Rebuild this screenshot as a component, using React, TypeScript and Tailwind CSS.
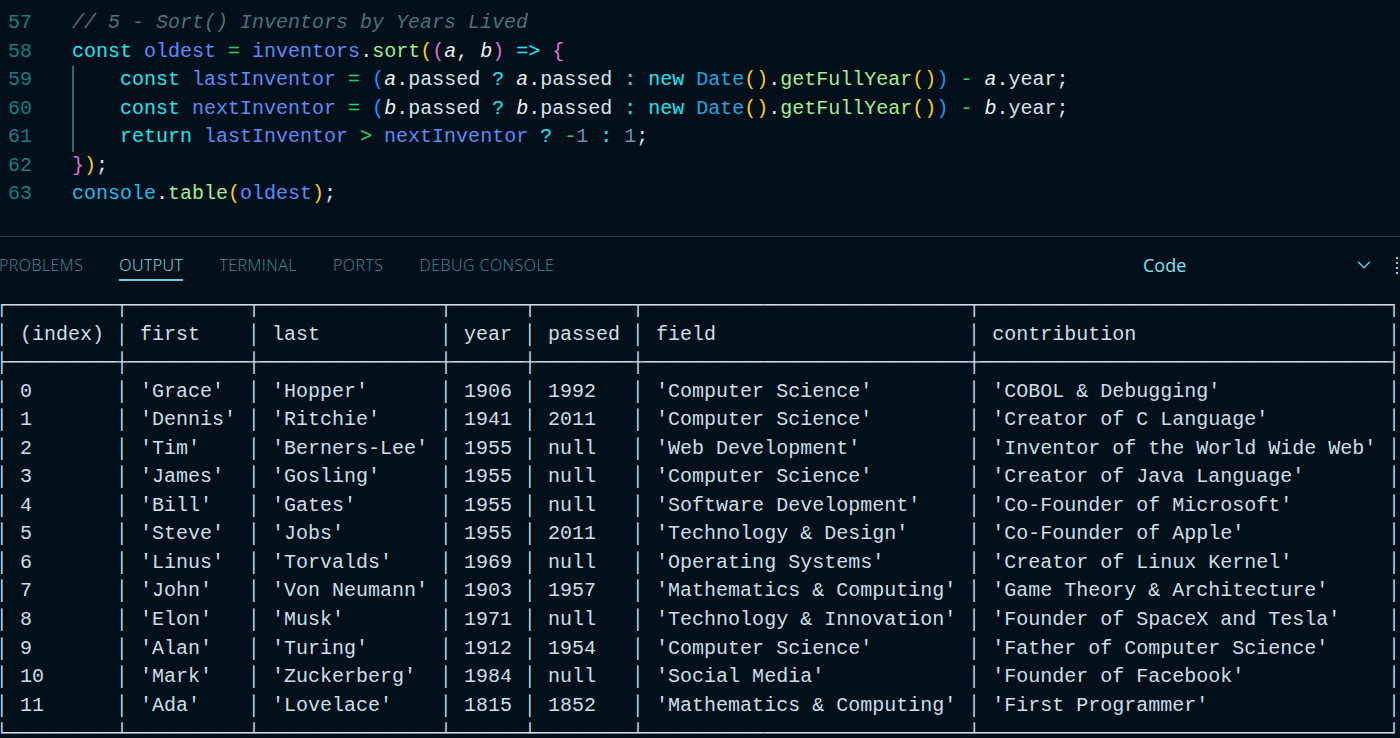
import { ChevronDown } from 'lucide-react';

type Token = [string, string];

const c = {
    kw: 'text-[#19e6f2]',
    id: 'text-[#5b8bf7]',
    op: 'text-[#1fd56d]',
    fn: 'text-[#a3ee8e]',
    txt: 'text-[#d5e4ea]',
    par: 'italic text-[#e9f1f4]',
    y: 'text-[#ffcf0f]',
    pk: 'text-[#e26fd3]',
    bl: 'text-[#1e93ff]',
    cls: 'text-[#19a7e2]',
    num: 'text-[#6a91b6]',
    con: 'text-[#20bce6]',
    cm: 'italic text-[#45747b]',
};

const codeLines: { n: number; indent?: boolean; tokens: Token[] }[] = [
    { n: 57, tokens: [['// 5 - Sort() Inventors by Years Lived', c.cm]] },
    {
        n: 58,
        tokens: [
            ['const', c.kw], [' ', c.txt], ['oldest', c.id], [' ', c.txt], ['=', c.op], [' ', c.txt],
            ['inventors', c.id], ['.', c.txt], ['sort', c.fn], ['(', c.y], ['(', c.pk], ['a', c.par],
            [', ', c.txt], ['b', c.par], [')', c.pk], [' ', c.txt], ['=>', c.kw], [' ', c.txt], ['{', c.pk],
        ],
    },
    {
        n: 59,
        indent: true,
        tokens: [
            ['const', c.kw], [' ', c.txt], ['lastInventor', c.id], [' ', c.txt], ['=', c.op], [' ', c.txt],
            ['(', c.bl], ['a', c.par], ['.passed ', c.txt], ['?', c.kw], [' ', c.txt], ['a', c.par],
            ['.passed ', c.txt], [':', c.kw], [' ', c.txt], ['new', c.kw], [' ', c.txt], ['Date', c.cls],
            ['()', c.y], ['.', c.txt], ['getFullYear', c.fn], ['()', c.y], [')', c.bl], [' ', c.txt],
            ['-', c.op], [' ', c.txt], ['a', c.par], ['.year;', c.txt],
        ],
    },
    {
        n: 60,
        indent: true,
        tokens: [
            ['const', c.kw], [' ', c.txt], ['nextInventor', c.id], [' ', c.txt], ['=', c.op], [' ', c.txt],
            ['(', c.bl], ['b', c.par], ['.passed ', c.txt], ['?', c.kw], [' ', c.txt], ['b', c.par],
            ['.passed ', c.txt], [':', c.kw], [' ', c.txt], ['new', c.kw], [' ', c.txt], ['Date', c.cls],
            ['()', c.y], ['.', c.txt], ['getFullYear', c.fn], ['()', c.y], [')', c.bl], [' ', c.txt],
            ['-', c.op], [' ', c.txt], ['b', c.par], ['.year;', c.txt],
        ],
    },
    {
        n: 61,
        indent: true,
        tokens: [
            ['return', c.kw], [' ', c.txt], ['lastInventor', c.id], [' ', c.txt], ['>', c.op], [' ', c.txt],
            ['nextInventor', c.id], [' ', c.txt], ['?', c.kw], [' ', c.txt], ['-', c.op], ['1', c.num],
            [' ', c.txt], [':', c.kw], [' ', c.txt], ['1', c.num], [';', c.txt],
        ],
    },
    { n: 62, tokens: [['}', c.pk], [')', c.y], [';', c.txt]] },
    {
        n: 63,
        tokens: [
            ['console', c.con], ['.', c.txt], ['table', c.fn], ['(', c.y], ['oldest', c.id], [')', c.y], [';', c.txt],
        ],
    },
];

const widths = [9, 10, 15, 6, 8, 27, 34];
const headers = ['(index)', 'first', 'last', 'year', 'passed', 'field', 'contribution'];

const inventors: string[][] = [
    ['0', "'Grace'", "'Hopper'", '1906', '1992', "'Computer Science'", "'COBOL & Debugging'"],
    ['1', "'Dennis'", "'Ritchie'", '1941', '2011', "'Computer Science'", "'Creator of C Language'"],
    ['2', "'Tim'", "'Berners-Lee'", '1955', 'null', "'Web Development'", "'Inventor of the World Wide Web'"],
    ['3', "'James'", "'Gosling'", '1955', 'null', "'Computer Science'", "'Creator of Java Language'"],
    ['4', "'Bill'", "'Gates'", '1955', 'null', "'Software Development'", "'Co-Founder of Microsoft'"],
    ['5', "'Steve'", "'Jobs'", '1955', '2011', "'Technology & Design'", "'Co-Founder of Apple'"],
    ['6', "'Linus'", "'Torvalds'", '1969', 'null', "'Operating Systems'", "'Creator of Linux Kernel'"],
    ['7', "'John'", "'Von Neumann'", '1903', '1957', "'Mathematics & Computing'", "'Game Theory & Architecture'"],
    ['8', "'Elon'", "'Musk'", '1971', 'null', "'Technology & Innovation'", "'Founder of SpaceX and Tesla'"],
    ['9', "'Alan'", "'Turing'", '1912', '1954', "'Computer Science'", "'Father of Computer Science'"],
    ['10', "'Mark'", "'Zuckerberg'", '1984', 'null', "'Social Media'", "'Founder of Facebook'"],
    ['11', "'Ada'", "'Lovelace'", '1815', '1852', "'Mathematics & Computing'", "'First Programmer'"],
];

const rule = (l: string, m: string, r: string) => l + widths.map((w) => '─'.repeat(w)).join(m) + r;
const row = (cells: string[]) => '│' + cells.map((v, i) => (' ' + v).padEnd(widths[i])).join('│') + '│';

const tableText = [
    rule('┌', '┬', '┐'),
    row(headers),
    rule('├', '┼', '┤'),
    ...inventors.map(row),
    rule('└', '┴', '┘'),
].join('\n');

const tabs = ['PROBLEMS', 'OUTPUT', 'TERMINAL', 'PORTS', 'DEBUG CONSOLE'];

export default function App() {
    return (
        <div className="w-[1400px] h-[738px] overflow-hidden bg-[#010f1b] font-['Liberation_Mono','DejaVu_Sans_Mono',monospace]">
            {/* Editor */}
            <div className="h-[237px] pt-[9px] border-b border-[#1b4550]">
                {codeLines.map((line) => (
                    <div key={line.n} className="flex text-[20px] leading-[28.55px] whitespace-pre">
                        <span className="w-[32px] text-right text-[#167c7e]">{line.n}</span>
                        <span className="ml-[40px] flex">
                            {line.indent && (
                                <span className="inline-block w-[48px] border-l-2 border-[#2b6870]" />
                            )}
                            {line.tokens.map(([t, cls], i) => (
                                <span key={i} className={cls}>
                                    {t}
                                </span>
                            ))}
                        </span>
                    </div>
                ))}
            </div>

            {/* Panel tabs */}
            <div className="h-[55px] flex items-start font-['Open_Sans',sans-serif]">
                <div className="flex gap-[30px] -ml-1">
                    {tabs.map((t) => (
                        <div key={t} className="flex flex-col px-[3px] pt-[18px]">
                            <span
                                className={`h-[20px] leading-[20px] text-[16px] font-light tracking-[0.45px] whitespace-nowrap ${
                                    t === 'OUTPUT' ? 'text-[#86e2ef]' : 'text-[#3e8f9a]'
                                }`}
                            >
                                {t}
                            </span>
                            <span className={`mt-[4px] h-[2px] ${t === 'OUTPUT' ? 'bg-[#5cd2e2]' : 'bg-transparent'}`} />
                        </div>
                    ))}
                </div>
                <div className="ml-auto flex items-center pt-[17px] -mr-[6px]">
                    <div className="w-[240px] flex items-center justify-between pl-[8px]">
                        <span className="text-[18px] leading-[22px] text-[#7de6f4]">Code</span>
                        <ChevronDown className="w-[22px] h-[22px] text-[#63dced]" strokeWidth={1.3} />
                    </div>
                    <div className="ml-[21px] w-[10px] flex flex-col gap-[3px] py-[1px]">
                        <span className="w-[2px] h-[2px] bg-[#63dced]" />
                        <span className="w-[2px] h-[2px] bg-[#63dced]" />
                        <span className="w-[2px] h-[2px] bg-[#63dced]" />
                        <span className="w-[2px] h-[2px] bg-[#63dced]" />
                    </div>
                </div>
            </div>

            {/* Output */}
            <pre className="-ml-1 text-[20px] leading-[28.55px] text-[#cbdfe7] font-['Liberation_Mono','DejaVu_Sans_Mono',monospace]">
                {tableText}
            </pre>
        </div>
    );
}
